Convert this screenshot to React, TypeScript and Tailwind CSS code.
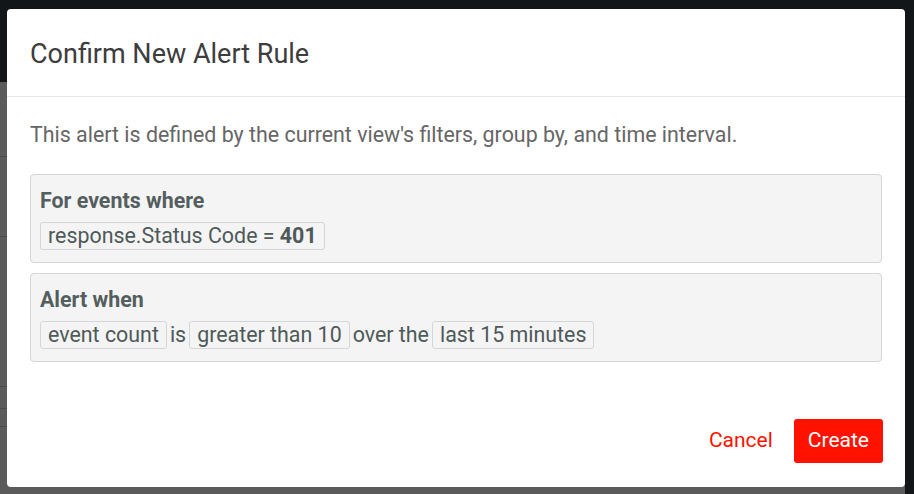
import React from "react";

function Chip({ children }: { children: React.ReactNode }) {
  return (
    <span className="inline-block h-[28px] rounded-[3px] border border-[#d3d7d7] px-[7px] leading-[26px]">
      {children}
    </span>
  );
}

export default function App() {
  return (
    <div className="relative h-[494px] w-[914px] overflow-hidden bg-[#5b5b5b] font-['Roboto',sans-serif]">
      {/* backdrop: dimmed page behind the dialog */}
      <div className="flex h-full">
        <div className="flex flex-1 flex-col">
          <div className="h-[82px] bg-[#121619]" />
          <div className="flex flex-1 flex-col">
            <div className="h-[75px] border-b border-[#4a4a4a]" />
            <div className="h-[80px] border-b border-[#4a4a4a]" />
            <div className="h-[150px] border-b border-[#4a4a4a]" />
            <div className="h-[22px] border-b border-[#4a4a4a]" />
            <div className="h-[18px] border-b border-[#4a4a4a]" />
            <div className="flex-1" />
          </div>
        </div>
        <div className="w-[9px] bg-[#121619]" />
      </div>

      {/* dialog */}
      <div className="absolute left-[7px] top-[9px] flex h-[478px] w-[898px] flex-col rounded-[4px] bg-white">
        <div className="flex h-[88px] shrink-0 items-center border-b border-[#e6e6e6] px-[23px]">
          <h2 className="mt-[2px] text-[27px] font-normal leading-[32px] text-[#3d3d3d]">Confirm New Alert Rule</h2>
        </div>

        <div className="flex-1 px-[23px] pt-[25px] text-[21.4px] leading-[26px]">
          <p className="mb-[26px] text-[#666666]">
            This alert is defined by the current view's filters, group by, and time interval.
          </p>

          <div className="flex flex-col gap-[10px] text-[#4e5959]">
            <div className="rounded-[4px] border border-[#d2d6d6] bg-[#f4f4f4] px-[9px] pb-[12px] pt-[13px]">
              <div className="mb-[8px] font-bold text-[#555e5e]">For events where</div>
              <div className="flex h-[28px] items-center">
                <Chip>
                  response.Status Code = <b className="font-bold">401</b>
                </Chip>
              </div>
            </div>

            <div className="rounded-[4px] border border-[#d2d6d6] bg-[#f4f4f4] px-[9px] pb-[12px] pt-[13px]">
              <div className="mb-[8px] font-bold text-[#555e5e]">Alert when</div>
              <div className="flex h-[28px] items-center gap-[3px] whitespace-nowrap">
                <Chip>event count</Chip>
                <span>is</span>
                <Chip>greater than 10</Chip>
                <span>over the</span>
                <Chip>last 15 minutes</Chip>
              </div>
            </div>
          </div>
        </div>

        <div className="flex shrink-0 items-center justify-end gap-[7px] px-[22px] pb-[24px]">
          <button className="h-[44px] rounded-[3px] px-[14px] text-[21px] text-[#ff1200]">Cancel</button>
          <button className="h-[44px] rounded-[3px] bg-[#ff1200] px-[14px] text-[21px] text-white">Create</button>
        </div>
      </div>
    </div>
  );
}
